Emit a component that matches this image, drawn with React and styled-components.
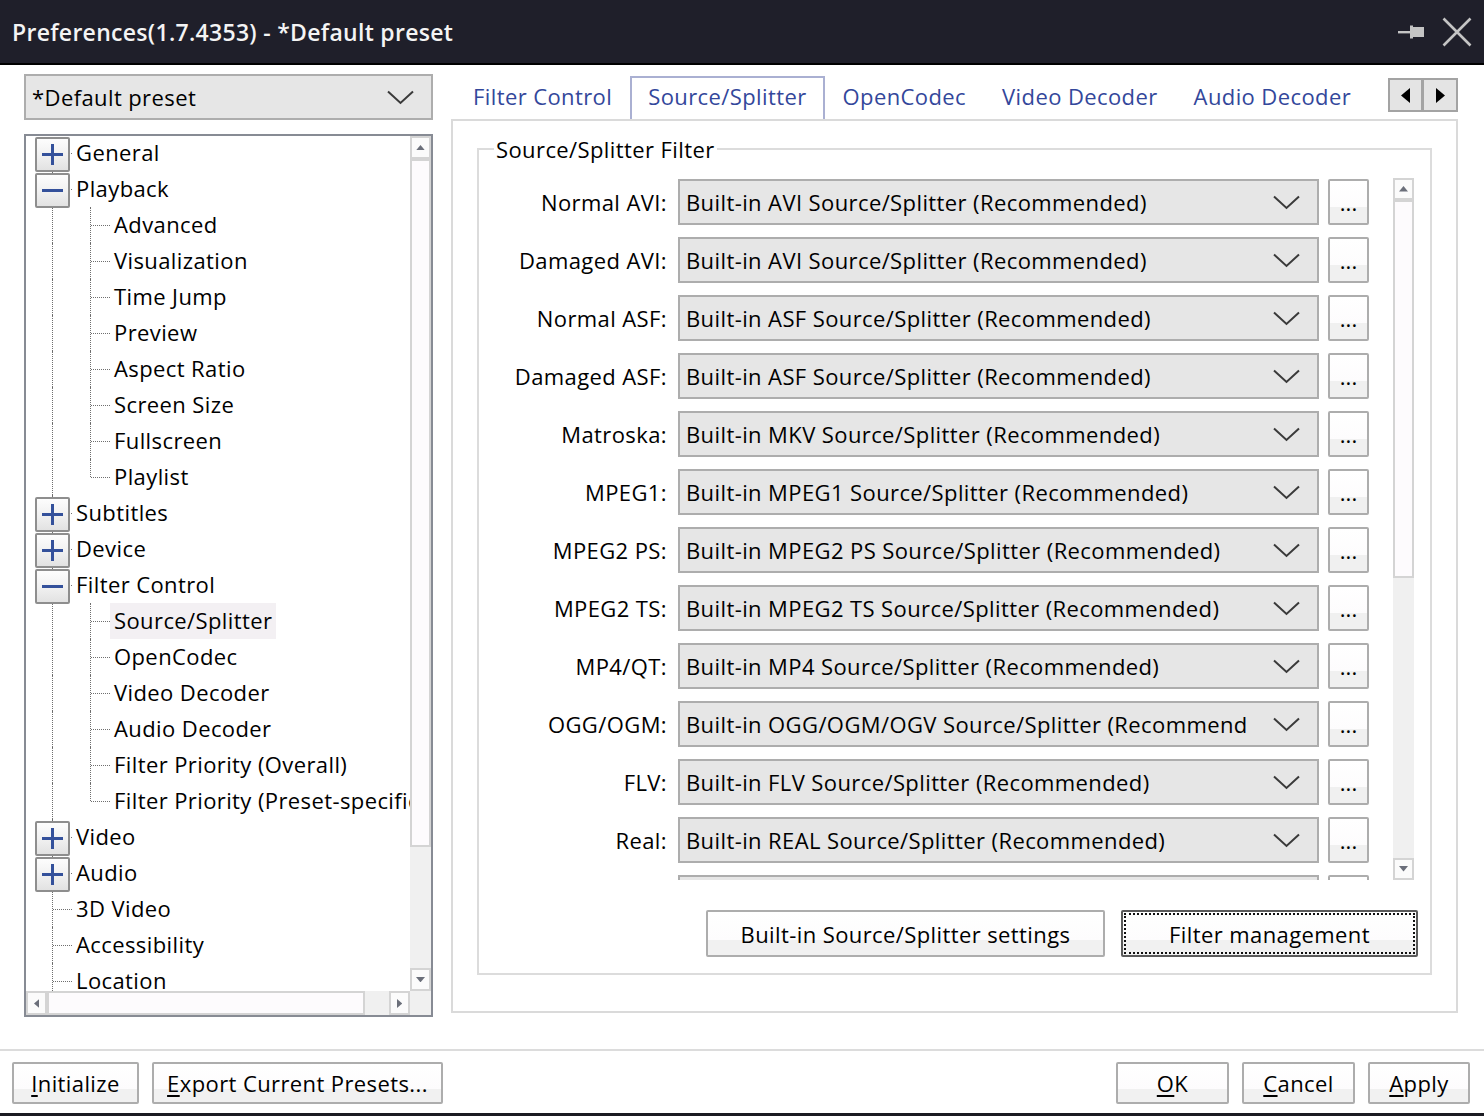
import React from "react";
import styled, { createGlobalStyle, css } from "styled-components";

const FONT = `"Open Sans", "Noto Sans", sans-serif`;

const GlobalStyle = createGlobalStyle`
  html, body { margin: 0; padding: 0; background: #fff; }
  body { font-family: ${FONT}; font-size: 22px; letter-spacing: 0.4px; color: #000; }
  * { box-sizing: border-box; }
`;

const treeItems = [
  { label: "General", level: 0, toggle: "plus" },
  { label: "Playback", level: 0, toggle: "minus" },
  { label: "Advanced", level: 1 },
  { label: "Visualization", level: 1 },
  { label: "Time Jump", level: 1 },
  { label: "Preview", level: 1 },
  { label: "Aspect Ratio", level: 1 },
  { label: "Screen Size", level: 1 },
  { label: "Fullscreen", level: 1 },
  { label: "Playlist", level: 1, last: true },
  { label: "Subtitles", level: 0, toggle: "plus" },
  { label: "Device", level: 0, toggle: "plus" },
  { label: "Filter Control", level: 0, toggle: "minus" },
  { label: "Source/Splitter", level: 1, selected: true },
  { label: "OpenCodec", level: 1 },
  { label: "Video Decoder", level: 1 },
  { label: "Audio Decoder", level: 1 },
  { label: "Filter Priority (Overall)", level: 1 },
  { label: "Filter Priority (Preset-specific)", level: 1, last: true },
  { label: "Video", level: 0, toggle: "plus" },
  { label: "Audio", level: 0, toggle: "plus" },
  { label: "3D Video", level: 0 },
  { label: "Accessibility", level: 0 },
  { label: "Location", level: 0 },
];

const tabs = ["Filter Control", "Source/Splitter", "OpenCodec", "Video Decoder", "Audio Decoder"];

const splitters = [
  ["Normal AVI:", "Built-in AVI Source/Splitter (Recommended)"],
  ["Damaged AVI:", "Built-in AVI Source/Splitter (Recommended)"],
  ["Normal ASF:", "Built-in ASF Source/Splitter (Recommended)"],
  ["Damaged ASF:", "Built-in ASF Source/Splitter (Recommended)"],
  ["Matroska:", "Built-in MKV Source/Splitter (Recommended)"],
  ["MPEG1:", "Built-in MPEG1 Source/Splitter (Recommended)"],
  ["MPEG2 PS:", "Built-in MPEG2 PS Source/Splitter (Recommended)"],
  ["MPEG2 TS:", "Built-in MPEG2 TS Source/Splitter (Recommended)"],
  ["MP4/QT:", "Built-in MP4 Source/Splitter (Recommended)"],
  ["OGG/OGM:", "Built-in OGG/OGM/OGV Source/Splitter (Recommended)"],
  ["FLV:", "Built-in FLV Source/Splitter (Recommended)"],
  ["Real:", "Built-in REAL Source/Splitter (Recommended)"],
  ["", ""],
];

const Chevron = () => (
  <svg width="27" height="15" viewBox="0 0 27 15">
    <polyline points="1,1.5 13.5,13 26,1.5" fill="none" stroke="#3a3a3a" strokeWidth="2" />
  </svg>
);

const Tri = ({ dir, size = 9, color = "#6b6f7a" }) => {
  const pts = {
    up: "0,6 5,0 10,6",
    down: "0,0 5,6 10,0",
    left: "6,0 0,5 6,10",
    right: "0,0 6,5 0,10",
  }[dir];
  const vertical = dir === "up" || dir === "down";
  return (
    <svg width={vertical ? size : size * 0.6} height={vertical ? size * 0.6 : size} viewBox={vertical ? "0 0 10 6" : "0 0 6 10"}>
      <polygon points={pts} fill={color} />
    </svg>
  );
};

const Scrollbar = ({ horizontal, arrow, thumb }) => (
  <Bar $horizontal={horizontal}>
    <ArrowCell $size={arrow}>
      <Tri dir={horizontal ? "left" : "up"} />
    </ArrowCell>
    <Thumb $size={thumb} />
    <Track />
    <ArrowCell $size={arrow}>
      <Tri dir={horizontal ? "right" : "down"} />
    </ArrowCell>
  </Bar>
);

const TreeRow = ({ item, index }) => {
  const guides =
    item.level === 0 ? (
      <Guide $vertical $branch $first={index === 0}>
        {item.toggle && (
          <Toggle>
            <PlusBar $minus={item.toggle === "minus"} />
          </Toggle>
        )}
      </Guide>
    ) : (
      <>
        <Guide $vertical />
        <Guide $vertical $branch $end={item.last} />
      </>
    );
  return (
    <Row>
      {guides}
      <NodeLabel $selected={item.selected}>{item.label}</NodeLabel>
    </Row>
  );
};

export default function App() {
  return (
    <>
      <GlobalStyle />
      <Window>
        <TitleBar>
          <Title>Preferences(1.7.4353) - *Default preset</Title>
          <TitleIcons>
            <svg width="28" height="20" viewBox="0 0 28 20">
              <rect x="0" y="9" width="13" height="2.4" fill="#c4c4c4" />
              <rect x="12" y="3.5" width="3" height="13" fill="#c4c4c4" />
              <rect x="15" y="5" width="11" height="10" fill="#c4c4c4" />
            </svg>
            <svg width="30" height="30" viewBox="0 0 30 30">
              <path d="M1.5 1.5 L28.5 28.5 M28.5 1.5 L1.5 28.5" stroke="#c4c4c4" strokeWidth="2.6" />
            </svg>
          </TitleIcons>
        </TitleBar>

        <Body>
          <LeftColumn>
            <Combo>
              <ComboText>*Default preset</ComboText>
              <ComboArrow>
                <Chevron />
              </ComboArrow>
            </Combo>
            <TreeBox>
              <TreeContent>
                {treeItems.map((item, i) => (
                  <TreeRow key={item.label} item={item} index={i} />
                ))}
              </TreeContent>
              <Scrollbar arrow={23} thumb={688} />
              <Scrollbar horizontal arrow={21} thumb={318} />
              <Corner />
            </TreeBox>
          </LeftColumn>

          <RightColumn>
            <TabHeader>
              <TabStrip>
                {tabs.map((t) => (
                  <Tab key={t} $active={t === "Source/Splitter"}>
                    {t}
                  </Tab>
                ))}
              </TabStrip>
              <TabArrows>
                <TabArrow>
                  <Tri dir="left" size={15} color="#000" />
                </TabArrow>
                <TabArrow>
                  <Tri dir="right" size={15} color="#000" />
                </TabArrow>
              </TabArrows>
            </TabHeader>
            <TabPanel>
              <Group>
                <Legend>Source/Splitter Filter</Legend>
                <ListArea>
                  <ListViewport>
                    {splitters.map(([label, value], i) => (
                      <SplitterRow key={i}>
                        <RowLabel>{label}</RowLabel>
                        <RowCombo>
                          <ComboText>{value}</ComboText>
                          <ComboArrow>
                            <Chevron />
                          </ComboArrow>
                        </RowCombo>
                        <DotsButton>...</DotsButton>
                      </SplitterRow>
                    ))}
                  </ListViewport>
                  <ListScroll>
                    <Scrollbar arrow={22} thumb={378} />
                  </ListScroll>
                </ListArea>
                <GroupButtons>
                  <PushButton $width={399}>Built-in Source/Splitter settings</PushButton>
                  <PushButton $width={297} $default>
                    Filter management
                  </PushButton>
                </GroupButtons>
              </Group>
            </TabPanel>
          </RightColumn>
        </Body>

        <Footer>
          <ButtonGroup>
            <PushButton $width={127} $height={42}>
              <u>I</u>nitialize
            </PushButton>
            <PushButton $width={291} $height={42}>
              <u>E</u>xport Current Presets...
            </PushButton>
          </ButtonGroup>
          <ButtonGroup>
            <PushButton $width={113} $height={42}>
              <u>O</u>K
            </PushButton>
            <PushButton $width={113} $height={42}>
              <u>C</u>ancel
            </PushButton>
            <PushButton $width={102} $height={42}>
              <u>A</u>pply
            </PushButton>
          </ButtonGroup>
        </Footer>
      </Window>
    </>
  );
}

const Window = styled.div`
  width: 1484px;
  height: 1116px;
  display: flex;
  flex-direction: column;
  overflow: hidden;
  background: #fff;
  border-bottom: 3px solid #1b1b22;
`;

const TitleBar = styled.div`
  flex: 0 0 65px;
  display: flex;
  align-items: center;
  padding: 0 12px 0 12px;
  background: #1f1f2a;
  border-bottom: 2px solid #000;
`;

const Title = styled.div`
  color: #f4f4f4;
  font-size: 23px;
  font-weight: 600;
  letter-spacing: 0.3px;
`;

const TitleIcons = styled.div`
  margin-left: auto;
  display: flex;
  align-items: center;
  gap: 16px;
`;

const Body = styled.div`
  flex: 1;
  display: flex;
  gap: 18px;
  padding: 9px 26px 0 24px;
`;

const LeftColumn = styled.div`
  flex: 0 0 409px;
  display: flex;
  flex-direction: column;
  gap: 14px;
`;

const comboBase = css`
  display: flex;
  align-items: center;
  height: 46px;
  min-width: 0;
  background: #e6e6e6;
  border: 2px solid #adadad;
  padding-left: 6px;
`;

const Combo = styled.div`
  ${comboBase}
`;

const ComboText = styled.div`
  flex: 1;
  min-width: 0;
  overflow: hidden;
  white-space: nowrap;
`;

const ComboArrow = styled.div`
  flex: 0 0 70px;
  display: flex;
  justify-content: flex-end;
  padding-right: 17px;
`;

const TreeBox = styled.div`
  height: 883px;
  border: 2px solid #878b94;
  display: grid;
  grid-template-columns: minmax(0, 1fr) 21px;
  grid-template-rows: minmax(0, 1fr) 24px;
`;

const TreeContent = styled.div`
  overflow: hidden;
  padding-left: 8px;
  margin-top: -1px;
`;

const Row = styled.div`
  display: flex;
  height: 36px;
  white-space: nowrap;
`;

const Guide = styled.div`
  position: relative;
  flex: 0 0 38px;
  height: 100%;

  &::before {
    content: "";
    display: ${(p) => (p.$vertical ? "block" : "none")};
    position: absolute;
    left: 18px;
    top: ${(p) => (p.$first ? "50%" : "0")};
    bottom: ${(p) => (p.$end ? "50%" : "0")};
    border-left: 1px dotted #6f6f6f;
  }

  &::after {
    content: "";
    display: ${(p) => (p.$branch ? "block" : "none")};
    position: absolute;
    left: 19px;
    right: 0;
    top: 18px;
    border-top: 1px dotted #6f6f6f;
  }
`;

const Toggle = styled.div`
  position: absolute;
  z-index: 1;
  left: 1px;
  top: 2px;
  width: 35px;
  height: 35px;
  border: 2px solid #8e8e8e;
  border-radius: 2px;
  background: linear-gradient(#fdfdfd, #f0f0f0 55%, #e2e2e2);
  display: flex;
  align-items: center;
  justify-content: center;
`;

const PlusBar = styled.div`
  position: relative;
  width: 21px;
  height: 3px;
  background: #34519b;

  &::after {
    content: "";
    display: ${(p) => (p.$minus ? "none" : "block")};
    position: absolute;
    left: 9px;
    top: -9px;
    width: 3px;
    height: 21px;
    background: #34519b;
  }
`;

const NodeLabel = styled.div`
  padding: 0 4px;
  line-height: 34px;
  background: ${(p) => (p.$selected ? "#f3f0f3" : "transparent")};
`;

const Bar = styled.div`
  display: flex;
  flex-direction: ${(p) => (p.$horizontal ? "row" : "column")};
  background: #f0f0f0;
  height: 100%;
  min-width: 0;
  min-height: 0;
`;

const ArrowCell = styled.div`
  flex: 0 0 ${(p) => p.$size}px;
  display: flex;
  align-items: center;
  justify-content: center;
  background: #fbfbfb;
  border: 2px solid #d4d4d4;
`;

const Thumb = styled.div`
  flex: 0 0 ${(p) => p.$size}px;
  background: #fdfbfd;
  border: 2px solid #d4d4d4;
`;

const Track = styled.div`
  flex: 1;
`;

const Corner = styled.div`
  background: #f0f0f0;
`;

const RightColumn = styled.div`
  flex: 1;
  min-width: 0;
  display: flex;
  flex-direction: column;
  padding-top: 2px;
`;

const TabHeader = styled.div`
  display: flex;
  height: 43px;
`;

const TabStrip = styled.div`
  flex: 1;
  min-width: 0;
  display: flex;
  align-items: flex-end;
  overflow: hidden;
  padding-left: 4px;
`;

const Tab = styled.div`
  position: relative;
  z-index: 1;
  flex-shrink: 0;
  height: ${(p) => (p.$active ? "45px" : "40px")};
  margin-bottom: ${(p) => (p.$active ? "-2px" : "2px")};
  padding: 0 16px;
  line-height: ${(p) => (p.$active ? "37px" : "34px")};
  color: #33479b;
  white-space: nowrap;
  background: ${(p) => (p.$active ? "#fff" : "transparent")};
  border: 2px solid ${(p) => (p.$active ? "#aab0d2" : "transparent")};
  border-bottom: none;
`;

const TabArrows = styled.div`
  display: flex;
  margin-top: 2px;
  height: 34px;
`;

const TabArrow = styled.div`
  width: 35px;
  display: flex;
  align-items: center;
  justify-content: center;
  background: #e4e4e4;
  border: 2px solid #a3a3a3;
  & + & {
    border-left-width: 1px;
  }
`;

const TabPanel = styled.div`
  height: 894px;
  border: 2px solid #dadada;
  padding: 14px 24px 36px 24px;
`;

const Group = styled.fieldset`
  margin: 0;
  min-width: 0;
  height: 100%;
  border: 2px solid #dcdcdc;
  padding: 15px 12px 16px 0;
  display: flex;
  flex-direction: column;
`;

const Legend = styled.legend`
  margin-left: 15px;
  padding: 0 2px;
  line-height: 28px;
`;

const ListArea = styled.div`
  display: flex;
  height: 702px;
  padding-right: 4px;
`;

const ListViewport = styled.div`
  flex: 1;
  min-width: 0;
  overflow: hidden;
  padding-top: 1px;
`;

const ListScroll = styled.div`
  flex: 0 0 21px;
`;

const SplitterRow = styled.div`
  display: flex;
  align-items: center;
  height: 46px;
  margin-bottom: 12px;
`;

const RowLabel = styled.div`
  flex: 0 0 188px;
  text-align: right;
  white-space: nowrap;
`;

const RowCombo = styled.div`
  ${comboBase}
  flex: 0 0 641px;
  width: 641px;
  margin-left: 11px;
`;

const DotsButton = styled.div`
  flex: 0 0 41px;
  height: 46px;
  margin-left: 9px;
  border: 2px solid #adadad;
  border-radius: 2px;
  background: linear-gradient(#fff 0%, #fdfcfd 62%, #f0f0f0 63%, #f0f0f0 100%);
  display: flex;
  align-items: center;
  justify-content: center;
  letter-spacing: 0;
  padding-bottom: 1px;
`;

const GroupButtons = styled.div`
  display: flex;
  justify-content: flex-end;
  gap: 16px;
  margin-top: 30px;
`;

const PushButton = styled.div`
  position: relative;
  flex-shrink: 0;
  width: ${(p) => p.$width}px;
  height: ${(p) => p.$height || 47}px;
  display: flex;
  align-items: center;
  justify-content: center;
  white-space: nowrap;
  border: 2px solid ${(p) => (p.$default ? "#5a5a5a" : "#adadad")};
  border-radius: 2px;
  background: linear-gradient(#fff 0%, #fdfcfd 65%, #f1f1f1 66%, #f1f1f1 100%);

  u {
    text-underline-offset: 3px;
  }

  ${(p) =>
    p.$default &&
    css`
      &::after {
        content: "";
        position: absolute;
        inset: 1px;
        border: 2px dotted #111;
      }
    `}
`;

const Footer = styled.div`
  flex: 0 0 64px;
  display: flex;
  justify-content: space-between;
  padding: 11px 14px 0 12px;
  border-top: 2px solid #dcdcdc;
`;

const ButtonGroup = styled.div`
  display: flex;
  gap: 13px;
  height: 42px;
`;
